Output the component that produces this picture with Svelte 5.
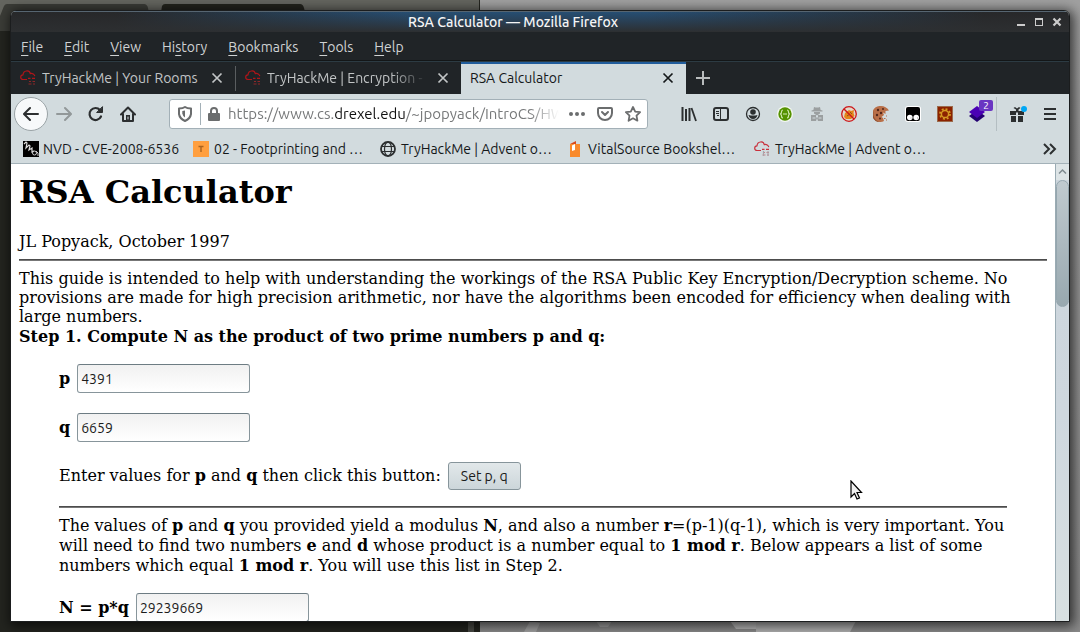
<script>
  let p = $state('4391');
  let q = $state('6659');
  let n = $state('29239669');
  const menus = ['File', 'Edit', 'View', 'History', 'Bookmarks', 'Tools', 'Help'];
  const keys = { History: 2 };
  const tabs = ['TryHackMe | Your Rooms', 'TryHackMe | Encryption - C'];
  const bookmarks = [
    { icon: 'nvd', text: 'NVD - CVE-2008-6536' },
    { icon: 'note', text: '02 - Footprinting and …' },
    { icon: 'globe', text: 'TryHackMe | Advent o…' },
    { icon: 'vital', text: 'VitalSource Bookshel…' },
    { icon: 'thm', text: 'TryHackMe | Advent o…' }
  ];
  const tools = ['library', 'sidebar', 'account', 'green', 'spy', 'nofox', 'cookie', 'tamper', 'gear', 'layers'];
  function setPQ() {
    n = String(Number(p) * Number(q));
  }
</script>

{#snippet cloud(light)}
  <svg width="16" height="16" viewBox="0 0 16 16" fill="none" stroke={light ? '#c9303c' : '#b01519'} stroke-width="1.2">
    <path d="M7 9.5H3.2C-.2 9.3 0 5 3 4.8 3.300 .2 9.500-.4 10.300 3.600c2.200-.6 4.200.7 4.500 2.600M8 8.400h2.500M12 8.400h3" />
    <path stroke={light ? '#c98289' : '#8d2629'} d="M9 11.500h2M12.500 11.500H15M8.500 14h3M13 14h2" />
    {#if light}<path stroke="#a9a5aa" d="M9.500 10v5M14 10v5" />{/if}
  </svg>
{/snippet}

{#snippet cross()}
  <svg width="12" height="12" viewBox="0 0 12 12" fill="none" stroke="currentColor" stroke-width="1.700"><path d="M1.500 1.500l9 9M10.500 1.500l-9 9" /></svg>
{/snippet}

<div class="desktop">
  <svg class="backdrop" width="480" height="100%" aria-hidden="true">
    <rect width="480" height="100%" fill="#23241f" />
    <rect width="480" height="31" fill="#64655f" />
    <path d="M0 31V16L4 6Q5 4 7 4H144Q147 4 148 8L152 31Z" fill="#3b3c37" />
    <path d="M158 31L162 6Q163 4 165 4H300Q303 4 304 8L310 31Z" fill="#22231d" />
    <rect x="468" y="40" width="6" height="100%" fill="#484944" />
    <rect x="479" width="1" height="100%" fill="#24251f" />
  </svg>
  <svg class="polygons" width="400" height="11" viewBox="0 0 400 11" aria-hidden="true">
    <path d="M50 0l-6 11h12l4-9zM116 0h16l-4 6h-8z" fill="#a2a2a2" />
    <path d="M250 0h48l-6 8h-36z" fill="#b8b8b8" /><path d="M276 0h100l-6 11h-94z" fill="#b0b0b0" />
  </svg>

  <div class="window">
    <header class="titlebar">
      <span class="title">RSA Calculator — Mozilla Firefox</span>
      <div class="winbtns">
        <button aria-label="Minimize"><svg width="10" height="10" fill="#ccc"><path d="M1 7h8v2H1z" /></svg></button>
        <button aria-label="Maximize"><svg width="10" height="10" fill="#ccc"><path fill-rule="evenodd" d="M1 1h8v8H1zM2 3v5h6V3z" /></svg></button>
        <button aria-label="Close"><svg width="10" height="10" fill="none" stroke="#ccc" stroke-width="2.200"><path d="M1.500 1.500l7 7M8.500 1.500l-7 7" /></svg></button>
      </div>
    </header>

    <nav class="menus">
      {#each menus as m}
        {@const k = keys[m] ?? 0}
        <button>{m.slice(0, k)}<u>{m[k]}</u>{m.slice(k + 1)}</button>
      {/each}
    </nav>

    <div class="tabs">
      {#each tabs as t}
        <div class="tab">
          {@render cloud(false)}
          <span class="tabtext">{t}</span>
          <button aria-label="Close tab">{@render cross()}</button>
        </div>
      {/each}
      <div class="tab active">
        <span class="tabtext">RSA Calculator</span>
        <button aria-label="Close tab">{@render cross()}</button>
      </div>
      <button class="newtab" aria-label="New tab"><svg width="14" height="14" stroke="#b9bcbd" stroke-width="2"><path d="M7 0v14M0 7h14" /></svg></button>
    </div>

    <div class="toolbar">
      <button class="back" aria-label="Back"><svg width="16" height="16" fill="none" stroke="#2c2f30" stroke-width="2" stroke-linecap="round" stroke-linejoin="round"><path d="M15 8H1.500M7 2L1 8l6 6" /></svg></button>
      <button aria-label="Forward"><svg width="16" height="16" fill="none" stroke="#929899" stroke-width="2" stroke-linecap="round" stroke-linejoin="round"><path d="M1 8h13.500M9 2l6 6-6 6" /></svg></button>
      <button aria-label="Reload"><svg width="16" height="16" fill="none" stroke="#2c2f30" stroke-width="2.200" stroke-linecap="round"><path d="M13 10.500A6 6 0 1 1 12 4" /><path d="M14.500 1v5.500H9z" fill="#2c2f30" stroke-width="1" stroke-linejoin="round" /></svg></button>
      <button aria-label="Home"><svg width="16" height="16" fill="none" stroke="#2c2f30" stroke-width="2" stroke-linejoin="round" stroke-linecap="round"><path d="M1 8.500L8 1.500l7 7M3 8v7h10V8" /><path d="M6 15V9h4v6z" fill="#2c2f30" stroke="none" /><path d="M8 11v2" stroke="#d2dbde" stroke-width="1" /></svg></button>

      <div class="urlbar">
        <svg width="14" height="16" fill="none" stroke="#6b6d6e" stroke-width="2" stroke-linejoin="round"><path d="M1 2.500Q5 2.300 7 1q2 1.300 6 1.500V8q-.6 4.500-6 7-5.400-2.500-6-7z" /><path d="M7 4.500v7Q4.500 9.500 4.300 7.500V5z" fill="#6b6d6e" stroke="none" /></svg>
        <i></i>
        <svg width="12" height="14" fill="#6b6d6e"><path fill-rule="evenodd" d="M2 6V4a4 4 0 0 1 8 0v2h1q1 0 1 1v6q0 1-1 1H1q-1 0-1-1V7q0-1 1-1zM4 6h4V4a2 2 0 0 0-4 0z" /></svg>
        <span class="url">https://www.cs.<b>drexel.edu</b>/~jpopyack/IntroCS/HW</span>
        <button aria-label="Page actions"><svg width="16" height="4" fill="#6b6d6e"><circle cx="2" cy="2" r="2" /><circle cx="8" cy="2" r="2" /><circle cx="14" cy="2" r="2" /></svg></button>
        <button aria-label="Save to Pocket"><svg width="16" height="14" fill="none" stroke="#6b6d6e" stroke-width="2" stroke-linecap="round" stroke-linejoin="round"><path d="M1 2q0-1 1-1h12q1 0 1 1v4a7 7 0 0 1-14 0zM5 5l3 3 3-3" /></svg></button>
        <button aria-label="Bookmark"><svg width="16" height="16" fill="none" stroke="#6b6d6e" stroke-width="1.800" stroke-linejoin="round"><path d="M8 1l2.200 4.600 4.900.6-3.600 3.500.9 5L8 12.300 3.600 14.700l.9-5L.9 6.200l4.900-.6z" /></svg></button>
      </div>

      {#each tools as t}
        <button class="tool" aria-label={t}>
          <svg width="16" height="16" viewBox="0 0 16 16" fill="none">
            {#if t === 'library'}
              <path d="M1.500 1v14M5 3v12M8.500 2v13" stroke="#2c2f30" stroke-width="2" /><path d="M10.500 2l4.500 13" stroke="#2c2f30" stroke-width="1.800" />
            {:else if t === 'sidebar'}
              <rect x="1" y="2" width="14" height="12" rx="2" stroke="#2c2f30" stroke-width="2" /><path d="M7.500 2v12" stroke="#2c2f30" /><path d="M3 5.500h3M3 7.500h3M4 9.500h2" stroke="#2c2f30" />
            {:else if t === 'account'}
              <circle cx="8" cy="8" r="6.500" stroke="#2c2f30" stroke-width="1.300" /><circle cx="8" cy="6" r="2.800" fill="#2c2f30" /><path d="M3.500 9q4.500 1.200 9 0-1 4-4.500 4T3.500 9z" fill="#2c2f30" />
            {:else if t === 'green'}
              <circle cx="8" cy="8" r="8" fill="#f4f7f2" /><circle cx="8" cy="8" r="6.700" fill="#559200" /><path d="M6 4Q4.500 4 4.500 6T3 8q1.500 0 1.500 2T6 12M10 4q1.500 0 1.500 2T13 8q-1.500 0-1.500 2T10 12M6 8h4" stroke="#d4e9b5" stroke-width="1.200" />
            {:else if t === 'spy'}
              <g fill="#9b9fa0"><path d="M5 1q3 1.200 6 0l.6 3 1.900.5v1h-11v-1L4.400 4zM5 6h6v1.500l-3 2-3-2zM2 9h5v2l1 1-1 3H2zM9 9h5v6H9l-1-3 1-1z" /></g><path d="M3.500 12h3M9.500 12h3" stroke="#d2dbde" />
            {:else if t === 'nofox'}
              <circle cx="8" cy="8" r="7" fill="#e3d7c8" /><path d="M4 7l4-3 2 1 3-1-.5 3 1 3-3.500 3H5l-2-2z" fill="#e58419" /><path d="M6 10l3-2M9 6l2 2" stroke="#8b541b" /><circle cx="8" cy="8" r="7.300" stroke="#cd1719" stroke-width="1.300" /><path d="M3 3l10 10" stroke="#cd1719" stroke-width="1.400" />
            {:else if t === 'cookie'}
              <path d="M8 0a8 8 0 1 0 3 15l-1-3 -1.500-1 2.500-2-1-2.500 2.500 1.500 0-3 3.500-.500Q13 0 8 0z" fill="#b96f48" /><path d="M1 5a8 8 0 0 0 7 11 7 7 0 0 1-7-11z" fill="#93502f" /><g fill="#53271c"><circle cx="5" cy="4" r="1.200" /><circle cx="10" cy="3" r="1" /><circle cx="8" cy="7" r="1.200" /><circle cx="4" cy="9" r="1.200" /><circle cx="7" cy="12.500" r="1" /></g><path d="M11 12.500h1.500M13 14h1M13 10h1" stroke="#b96f48" />
            {:else if t === 'tamper'}
              <rect width="16" height="16" rx="3" fill="#fff" /><rect x="1" y="1" width="14" height="14" rx="2" fill="#000" /><circle cx="4.800" cy="11.500" r="2.800" fill="#fff" /><circle cx="11.200" cy="11.500" r="2.800" fill="#fff" /><path d="M5.500 12h1M12 12h1" stroke="#999" />
            {:else if t === 'gear'}
              <rect x=".5" y=".5" width="15" height="15" fill="#8c2200" stroke="#9c6b4c" /><circle cx="8" cy="8" r="5" stroke="#d69a22" stroke-width="1.800" stroke-dasharray="1.960 1.960" /><circle cx="8" cy="8" r="3.600" stroke="#d69a22" stroke-width="1.500" />
            {:else}
              <path d="M8 4l8 6-8 6-8-6z" fill="#240071" /><path d="M8 0l8 6-8 6-8-6z" fill="#4a00b4" />
            {/if}
          </svg>
          {#if t === 'layers'}<span class="badge">2</span>{/if}
        </button>
      {/each}
      <i class="divider"></i>
      <button class="tool" aria-label="What's new"><svg width="18" height="17" fill="#2c2f30"><path d="M1 5h6V3.500L4.500 2 6 1l2 1.500L10 1l1.500 1L9.500 3.500V5H15v4H9V6.500H7V9H1zM2 10h5v6H2zM9 10h5v6H9z" /><circle cx="16" cy="3" r="3" fill="#d2dbde" /><circle cx="15" cy="3" r="3" fill="#00a7f5" /></svg></button>
      <button class="tool" aria-label="Open menu"><svg width="12" height="12" stroke="#2c2f30" stroke-width="2"><path d="M0 1h12M0 6h12M0 11h12" /></svg></button>
    </div>

    <div class="bookmarks">
      {#each bookmarks as b}
        <a href="#top">
          {#if b.icon === 'thm'}
            {@render cloud(true)}
          {:else}
            <svg width="16" height="16" viewBox="0 0 16 16" fill="none">
              {#if b.icon === 'nvd'}
                <rect width="16" height="16" fill="#000" /><path d="M1 3l2-2 1 1-1 5 3-3 1 1-1 4 3-2 0 4 2-1" stroke="#ddd" stroke-width="1.200" /><circle cx="11.500" cy="12" r="2" stroke="#ccc" /><path d="M13 10l2 2v3" stroke="#ccc" />
              {:else if b.icon === 'note'}
                <rect width="16" height="16" fill="#ff9f3f" /><path d="M5.500 5.500h5M8 5.500V11" stroke="#a86321" stroke-width="1.400" />
              {:else if b.icon === 'globe'}
                <circle cx="8" cy="8" r="7" stroke="#2c2f30" stroke-width="1.800" /><ellipse cx="8" cy="8" rx="3.500" ry="7" stroke="#2c2f30" stroke-width="1.200" /><path d="M1 5.500h14M1 10.500h14" stroke="#2c2f30" stroke-width="1.200" />
              {:else}
                <path d="M3 3h10v13H3z" fill="#f98a2c" /><path d="M3 3l6-3v3z" fill="#d94a1c" /><path d="M5 4.500L8 3v6l-3 1z" fill="#fff" />
              {/if}
            </svg>
          {/if}
          <span>{b.text}</span>
        </a>
      {/each}
      <button aria-label="More bookmarks"><svg width="14" height="12" fill="none" stroke="#2c2f30" stroke-width="2"><path d="M1 1l5 5-5 5M7 1l5 5-5 5" /></svg></button>
    </div>

    <div class="view">
      <main id="top">
        <h1>RSA Calculator</h1>
        <div class="author">JL Popyack, October 1997</div>
        <hr />
        <p class="intro">This guide is intended to help with understanding the workings of the RSA Public Key Encryption/Decryption scheme. No provisions are made for high precision arithmetic, nor have the algorithms been encoded for efficiency when dealing with large numbers.</p>
        <p class="step"><b>Step 1. Compute N as the product of two prime numbers p and q:</b></p>
        <section>
          <div class="row"><label for="p">p</label><input id="p" bind:value={p} /></div>
          <div class="row"><label for="q">q</label><input id="q" bind:value={q} /></div>
          <div class="row"><span>Enter values for <b>p</b> and <b>q</b> then click this button:</span><button class="set" onclick={setPQ}>Set p, q</button></div>
          <hr />
          <p>The values of <b>p</b> and <b>q</b> you provided yield a modulus <b>N</b>, and also a number <b>r</b>=(p-1)(q-1), which is very important. You will need to find two numbers <b>e</b> and <b>d</b> whose product is a number equal to <b>1 mod r</b>. Below appears a list of some numbers which equal <b>1 mod r</b>. You will use this list in Step 2.</p>
          <div class="row"><label for="n">N = p*q</label><input id="n" bind:value={n} /></div>
        </section>
      </main>
      <div class="scroll">
        <svg width="13" height="16" fill="none" stroke="#7f8b90" stroke-width="1.500"><path d="M3 9.500L6.500 6l3.500 3.500" /></svg>
        <div class="thumb"></div>
      </div>
    </div>
  </div>

  <svg class="pointer" width="14" height="21" viewBox="0 0 14 21" aria-hidden="true"><path d="M1 1v16l3.500-3.500L7 19l2.500-1-2.500-5.500h4.500z" fill="#f1f1f1" stroke="#000" stroke-width="1.200" /></svg>
</div>

<style>
  :global(body) { margin: 0; }
  * { box-sizing: border-box; }
  .desktop {
    position: relative;
    height: 100vh;
    padding: 10px;
    overflow: hidden;
    background: linear-gradient(#a0a0a0, #8a8a8a);
    font: 14px/18px Ubuntu, "Noto Sans", sans-serif;
  }
  .backdrop { position: absolute; left: 0; top: 0; }
  .polygons { position: absolute; left: 480px; bottom: 0; }
  .pointer { position: absolute; left: 850px; top: 480px; }
  svg { flex: none; display: block; }
  button {
    display: flex;
    align-items: center;
    justify-content: center;
    padding: 0;
    border: 0;
    background: none;
    color: inherit;
    font: inherit;
  }
  .window {
    position: relative;
    display: flex;
    flex-direction: column;
    height: 100%;
    border: 1px solid #1b1d1e;
    border-radius: 6px 6px 0 0;
    overflow: hidden;
    background: #d2dbde;
    box-shadow: 2px 2px 12px 2px rgba(0, 0, 0, 0.65);
  }
  .titlebar {
    position: relative;
    display: flex;
    align-items: center;
    justify-content: center;
    height: 21px;
    flex: none;
    border-top: 1px solid #566571;
    background: linear-gradient(transparent, #2d2f31), linear-gradient(90deg, #27282a 10%, #264e73 38%, #264e73 60%, #27282a 92%);
    color: #f5f5f5;
    font-weight: 500;
  }
  .title { padding-right: 54px; }
  .winbtns { position: absolute; right: 7px; display: flex; gap: 8px; }
  .menus {
    display: flex;
    align-items: center;
    gap: 21px;
    height: 29px;
    flex: none;
    padding: 1px 0 0 10px;
    border-bottom: 1px solid #131617;
    background: #202427;
    color: #cfd2d3;
  }
  .menus u { text-underline-offset: 3px; }
  .tabs {
    display: flex;
    height: 33px;
    flex: none;
    border-top: 1px solid #2c3b43;
    background: #202427;
    color: #c2c5c6;
  }
  .tab { display: flex; align-items: center; width: 225px; padding: 0 12px 0 9px; gap: 6px; }
  .tab:first-child { border-right: 1px solid; border-image: linear-gradient(transparent 15%, #5a5e60 15%, #5a5e60 88%, transparent 88%) 1; }
  .tab.active { padding-bottom: 2px; border-top: 2px solid #215d9c; background: #d2dbde; color: #15181a; }
  .tabtext {
    flex: 1;
    overflow: hidden;
    white-space: nowrap;
  }
  .tab:nth-child(2) .tabtext { mask-image: linear-gradient(90deg, #000 calc(100% - 40px), transparent calc(100% - 4px)); }
  .newtab { width: 34px; }
  .toolbar { display: flex; align-items: center; height: 40px; flex: none; padding: 0 3px; }
  .toolbar > button { width: 32px; height: 32px; flex: none; position: relative; }
  .toolbar > .back { width: 34px; height: 34px; border: 1px solid #9aa3a6; border-radius: 50%; background: #f7f9fa; }
  .urlbar {
    display: flex;
    align-items: center;
    flex: 1;
    min-width: 0;
    height: 30px;
    margin: 0 25px;
    padding: 0 4px 0 8px;
    gap: 8px;
    border: 1px solid #a3b0b7;
    border-radius: 3px;
    background: #fff;
  }
  .urlbar i { width: 1px; height: 22px; background: #a3b0b7; margin-right: -1px; }
  .urlbar button { width: 20px; height: 20px; flex: none; }
  .url {
    flex: 1;
    overflow: hidden;
    white-space: nowrap;
    color: #77797a;
    font-size: 15px;
    mask-image: linear-gradient(90deg, #000 calc(100% - 30px), transparent);
  }
  .url b { color: #111; font-weight: 400; }
  .badge {
    position: absolute;
    right: 0;
    top: 2px;
    width: 14px;
    height: 11px;
    border-radius: 2px;
    background: #6a35c2;
    color: #fff;
    font-size: 10px;
    line-height: 11px;
  }
  .divider { width: 1px; height: 34px; background: #b4bec2; margin: 0 5px 0 3px; }
  .bookmarks {
    display: flex;
    align-items: center;
    height: 30px;
    flex: none;
    padding: 0 12px;
    border-bottom: 1px solid #a3b1b8;
  }
  .bookmarks a { display: flex; align-items: center; gap: 5px; width: 187px; color: #15181a; text-decoration: none; white-space: nowrap; }
  .bookmarks a:first-child { width: 170px; gap: 4px; }
  .bookmarks button { margin-left: auto; }
  .view { display: flex; flex: 1; min-height: 0; background: #fff; }
  main { flex: 1; min-width: 0; overflow: hidden; padding: 8px; color: #000; font: 16px/20px "DejaVu Serif", serif; }
  h1 { margin: 0 0 20px; font-size: 32px; line-height: 40px; }
  p { margin: 0; }
  hr { margin: 8px 0; height: 2px; border: 0; background: #777; border-top: 1px solid #4c4c4c; }
  .author, .intro { line-height: 19px; }
  .intro { margin-bottom: 1px; }
  section { margin: 17px 40px; }
  .row { display: flex; align-items: center; gap: 7px; margin-bottom: 20px; }
  .row label { font-weight: bold; }
  .row input {
    width: 173px;
    height: 29px;
    padding: 0 3px;
    border: 1px solid #87959b;
    border-top-color: #6d7c83;
    border-radius: 3px;
    background: linear-gradient(#f1f1f1, #fff);
    color: #1b1b1b;
    font: 14px/18px Ubuntu, "Noto Sans", sans-serif;
  }
  .set {
    height: 28px;
    padding: 0 12px;
    border: 1px solid #87959b;
    border-radius: 3px;
    background: linear-gradient(#e2e8ea, #ccd6da);
    color: #1b1b1b;
    font: 14px/18px Ubuntu, "Noto Sans", sans-serif;
  }
  section hr { margin: -4px 0 8px; }
  section p { margin-bottom: 17px; }
  .scroll { width: 14px; flex: none; border-left: 1px solid #9aabb3; background: linear-gradient(#ccd5dc, #ced7de 55%, #d8e0e1); }
  .scroll svg { background: #dde4e6; }
  .thumb { height: 127px; border: 1px solid #95a6ae; border-radius: 7px; background: linear-gradient(#c0cacf, #98a8af); }
</style>
